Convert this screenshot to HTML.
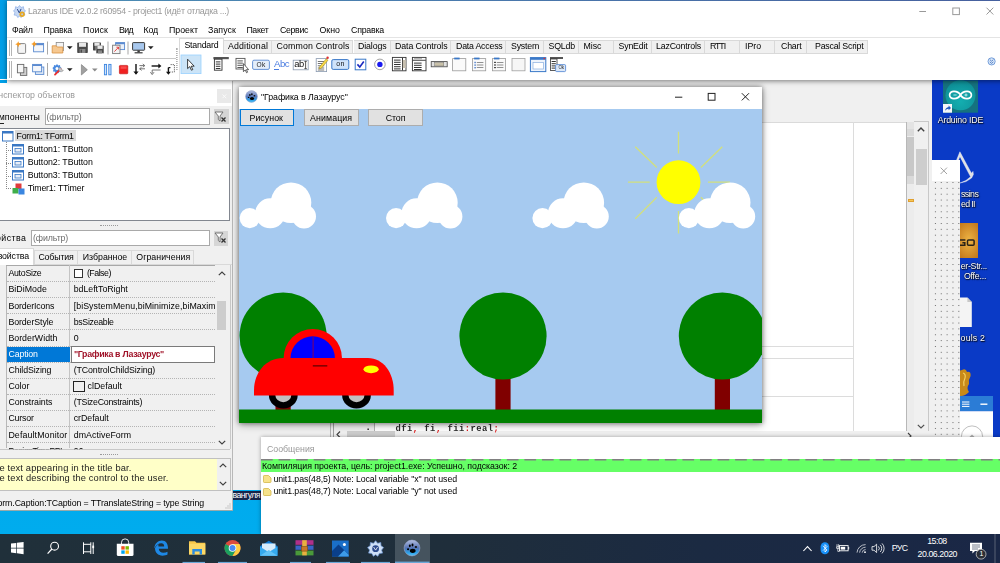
<!DOCTYPE html>
<html><head><meta charset="utf-8">
<style>
*{margin:0;padding:0;box-sizing:border-box}
html{background:#0a3ac6}html,body{width:1000px;height:563px;overflow:hidden;font-family:"Liberation Sans",sans-serif;font-size:8.8px;color:#000}
#R{position:absolute;left:-6px;top:-6px;width:1012px;height:575px;overflow:hidden;filter:blur(0.4px)}#I{position:absolute;left:6px;top:6px;width:0;height:0}
.L{position:absolute;left:0;top:0;width:0;height:0}
.a{position:absolute}
.t{position:absolute;white-space:pre}
svg{position:absolute;overflow:visible}
</style></head><body><div id="R"><div id="I">
<div class="L"><div class="a" style="left:-5px;top:-5px;width:267.00px;height:539.00px;background:linear-gradient(180deg,#009fe8 0%,#00a4ea 60%,#00acee 100%);"></div>
<div class="a" style="left:932px;top:78px;width:74.00px;height:362.00px;background:#0a3ac6;"></div>
<div class="a" style="left:232px;top:491px;width:29.00px;height:8.50px;background:#16264a;"></div>
<svg style="left:930px;top:78px;overflow:hidden" width="70" height="360" viewBox="930 78 70 360"><rect x="943" y="80.4" width="35" height="32.3" fill="#15727f"/><circle cx="960.5" cy="95.3" r="15" fill="url(#ardg)"/><defs><radialGradient id="ardg" cx="0.5" cy="0.7" r="0.7"><stop offset="0" stop-color="#14aeb0"/><stop offset="1" stop-color="#0e8e96"/></radialGradient></defs><path d="M960.5 95 C958 90.6 949.6 89.8 949.6 95 C949.6 100.2 958 99.4 960.5 95 C963 90.6 971.4 89.8 971.4 95 C971.4 100.2 963 99.4 960.5 95 Z" fill="none" stroke="#fff" stroke-width="1.7"/><path d="M953.4 95 H956.6 M964.4 95 H967.6 M966 93.4 V96.6" stroke="#fff" stroke-width="0.7"/><rect x="943" y="104" width="9" height="8.7" fill="#f4f6f8"/><path d="M945.2 110.8 Q945.4 107.4 948.6 107 V105.6 L951 108 L948.6 110.2 V108.8 Q946.4 108.8 945.2 110.8 Z" fill="#1a58c0"/><path d="M959.9 151.8 L971.4 173.2 L973 171.4 L973.4 174.4 L971.6 178 L966 181.6 L960 183 L966 180.4 L970.6 176.8 L969.4 174.6 L959.9 156.4 L956 166 L954.4 165.4 Z" fill="#e0e0e4" stroke="#fff" stroke-width="0.4"/><rect x="955" y="223" width="23" height="35" fill="#e09a28"/><rect x="955" y="223" width="23" height="35" fill="url(#csg)"/><defs><radialGradient id="csg" cx="0.6" cy="0.5" r="0.7"><stop offset="0" stop-color="#f0b848" stop-opacity="0.9"/><stop offset="1" stop-color="#b86a14" stop-opacity="0.9"/></radialGradient></defs><rect x="967.5" y="240" width="6.6" height="5.3" rx="1" fill="none" stroke="#2a2218" stroke-width="1.5"/><path d="M965.4 240 H958 V245.3 H964.8 V242.8 H962.4" fill="none" stroke="#2a2218" stroke-width="1.5"/><path d="M955 297.6 H967.4 L971.8 302 V327 H955 Z" fill="#f4f4f4"/><path d="M967.4 297.6 V302 H971.8 Z" fill="#c8c8c8"/><path d="M962 370 Q966 368 967 372 Q971 371 970.6 376 Q968 380 969 384 Q966 388 969 392 Q965 396 961 396 H955 V372 Z" fill="#c88a18"/><path d="M963 373 Q966 374 965 378 Q963 382 964 386" stroke="#f4d060" stroke-width="1.2" fill="none"/><rect x="955" y="396" width="38" height="15.2" fill="#2b7cd6"/><rect x="955" y="411.2" width="38" height="26" fill="#fff"/><path d="M962 402 H969.4 M962 404.2 H969.4 M962 406.4 H969.4" stroke="#fff" stroke-width="1"/><path d="M980.4 404.2 H987.4" stroke="#fff" stroke-width="1.4"/><circle cx="972" cy="436.5" r="10.6" fill="none" stroke="#b8b8b8" stroke-width="0.9"/><path d="M969.4 437 L972 434.4 L974.6 437" fill="#b0b0b0"/></svg>
<div class="t" style="left:232.50px;top:488.53px;height:12px;line-height:12px;font-size:8.8px;color:#fff;letter-spacing:-0.592px;">вангуля</div>
<div class="t" style="left:937.70px;top:113.73px;height:12px;line-height:12px;font-size:8.8px;color:#fff;letter-spacing:-0.176px;text-shadow:0.7px 0.9px 1.2px #000, 0 0 1.5px rgba(0,0,0,.9);">Arduino IDE</div>
<div class="t" style="left:961.00px;top:187.63px;height:12px;line-height:12px;font-size:8.8px;color:#fff;letter-spacing:-0.549px;text-shadow:0.7px 0.9px 1.2px #000, 0 0 1.5px rgba(0,0,0,.9);">ssins</div>
<div class="t" style="left:961.00px;top:197.93px;height:12px;line-height:12px;font-size:8.8px;color:#fff;letter-spacing:-0.665px;text-shadow:0.7px 0.9px 1.2px #000, 0 0 1.5px rgba(0,0,0,.9);">ed II</div>
<div class="t" style="left:960.70px;top:260.23px;height:12px;line-height:12px;font-size:8.8px;color:#fff;letter-spacing:-0.283px;text-shadow:0.7px 0.9px 1.2px #000, 0 0 1.5px rgba(0,0,0,.9);">er-Str...</div>
<div class="t" style="left:963.90px;top:270.13px;height:12px;line-height:12px;font-size:8.8px;color:#fff;letter-spacing:-0.214px;text-shadow:0.7px 0.9px 1.2px #000, 0 0 1.5px rgba(0,0,0,.9);">Offe...</div>
<div class="t" style="left:960.60px;top:332.03px;height:12px;line-height:12px;font-size:8.8px;color:#fff;letter-spacing:0.153px;text-shadow:0.7px 0.9px 1.2px #000, 0 0 1.5px rgba(0,0,0,.9);">ouls 2</div></div>
<div class="L"><div class="a" style="left:932.2px;top:159.7px;width:28.30px;height:278.30px;background:#f0f0f0;"></div>
<div class="a" style="left:932.2px;top:159.7px;width:28.30px;height:21.30px;background:#fff;"></div>
<svg style="left:940px;top:166.5px" width="8" height="8"><path d="M0.6 0.6 L7 7 M7 0.6 L0.6 7" stroke="#999" stroke-width="0.9"/></svg>
<svg style="left:932.2px;top:181px;overflow:hidden" width="28.3" height="255.5"><defs><pattern id="dots" x="2.9" y="1" width="5.856" height="5.856" patternUnits="userSpaceOnUse"><rect x="0" y="0" width="1" height="1" fill="#6a6a6a"/></pattern></defs><rect width="28.3" height="255.5" fill="url(#dots)"/></svg></div>
<div class="L"><div class="a" style="left:232px;top:78px;width:700.00px;height:412.00px;background:#f0f0f0;"></div>
<div class="a" style="left:240px;top:121.5px;width:688.50px;height:314.50px;background:#fff;border-top:1px solid #dadada;"></div>
<div class="a" style="left:852.5px;top:122px;width:1.00px;height:314.00px;background:#dcdcdc;"></div>
<div class="a" style="left:762px;top:345.5px;width:91.00px;height:1.00px;background:#dcdcdc;"></div>
<div class="a" style="left:762px;top:357.5px;width:91.00px;height:1.00px;background:#dcdcdc;"></div>
<div class="a" style="left:762px;top:395.5px;width:91.00px;height:1.00px;background:#dcdcdc;"></div>
<div class="a" style="left:906.2px;top:122px;width:0.90px;height:310.00px;background:#b8b8b8;"></div>
<div class="a" style="left:907px;top:122px;width:7.10px;height:310.00px;background:#ececec;"></div>
<div class="a" style="left:907px;top:122px;width:7.10px;height:6.60px;background:#e4e4e4;"></div>
<div class="a" style="left:907px;top:128.6px;width:7.10px;height:7.90px;background:#dadada;"></div>
<div class="a" style="left:907px;top:136.5px;width:7.10px;height:39.10px;background:#c8c8c8;"></div>
<div class="a" style="left:907px;top:175.6px;width:7.10px;height:8.80px;background:#dadada;"></div>
<div class="a" style="left:908px;top:199px;width:5.80px;height:2.60px;background:#f6c656;border:0.5px solid #e0a030;"></div>
<div class="a" style="left:914px;top:122px;width:14.50px;height:314.00px;background:#f0f0f0;"></div>
<div class="a" style="left:928.2px;top:121.5px;width:0.80px;height:314.50px;background:#c8c8c8;"></div>
<div class="a" style="left:914px;top:121.3px;width:15.00px;height:0.80px;background:#c8c8c8;"></div>
<div class="a" style="left:916.2px;top:149px;width:10.70px;height:35.90px;background:#cdcdcd;"></div>
<svg style="left:917.3px;top:127px" width="8" height="5"><path d="M0.8 4.2 L4 1 L7.2 4.2" fill="none" stroke="#404040" stroke-width="1.4"/></svg>
<svg style="left:917px;top:424px" width="8" height="5"><path d="M0.8 0.8 L4 4 L7.2 0.8" fill="none" stroke="#505050" stroke-width="1.2"/></svg>
<div class="a" style="left:232px;top:422px;width:101.00px;height:68.00px;background:#f0f0f0;"></div>
<div class="a" style="left:330px;top:422px;width:1.00px;height:15.00px;background:#b4b4b4;"></div>
<div class="a" style="left:333px;top:422px;width:1.00px;height:15.00px;background:#a0a0a0;"></div>
<div class="a" style="left:334px;top:422px;width:40.00px;height:9.00px;background:#f0f0f0;"></div>
<div class="a" style="left:374px;top:422px;width:1.00px;height:9.00px;background:#b0b0b0;"></div>
<div class="a" style="left:375px;top:422px;width:531.00px;height:9.00px;background:#fff;"></div>
<div class="a" style="left:334px;top:431px;width:572.00px;height:6.00px;background:#f0f0f0;"></div>
<div class="a" style="left:347px;top:431.3px;width:48.00px;height:5.70px;background:#cdcdcd;"></div>
<svg style="left:336px;top:431px" width="5" height="6"><path d="M4 0.5 L1 3.5 L4 6.5" fill="none" stroke="#404040" stroke-width="1.1"/></svg>
<div class="a" style="left:906px;top:431px;width:26.00px;height:7.00px;background:#f0f0f0;"></div>
<div class="a" style="left:852.5px;top:422px;width:1.00px;height:9.00px;background:#dcdcdc;"></div>
<svg style="left:906.5px;top:432.5px" width="5" height="6"><path d="M1 0 L4 3 L1 6" fill="none" stroke="#404040" stroke-width="1.1"/></svg>
<div class="t" style="left:365.50px;top:422.23px;height:12px;line-height:12px;font-size:8.8px;color:#000;font-weight:bold;font-family:'Liberation Mono',monospace;">.</div>
<div class="t" style="left:395.60px;top:422.53px;height:12px;line-height:12px;font-size:8.8px;color:#2a2a2a;letter-spacing:0.476px;font-weight:bold;font-family:'Liberation Mono',monospace;">dfi  fi  fii real </div>
<div class="t" style="left:395.60px;top:422.53px;height:12px;line-height:12px;font-size:8.8px;color:#e02020;letter-spacing:0.476px;font-weight:bold;font-family:'Liberation Mono',monospace;">   ,   ,    :    ;</div></div>
<div class="L"><div class="a" style="left:-5px;top:79px;width:237.00px;height:431.00px;background:#f0f0f0;"></div>
<div class="a" style="left:-5px;top:79px;width:237.00px;height:26.50px;background:#fff;"></div>
<div class="a" style="left:-5px;top:80px;width:11.50px;height:3.00px;background:#00a0e8;"></div>
<div class="a" style="left:217.4px;top:89.3px;width:13.50px;height:13.50px;background:#e9e9e9;"></div>
<svg style="left:222px;top:94.3px" width="5" height="5"><path d="M0.5 0.5 L4.2 4.2 M4.2 0.5 L0.5 4.2" stroke="#fbfbfb" stroke-width="0.9"/></svg>
<div class="a" style="left:0px;top:122.8px;width:4.20px;height:0.80px;background:#222;"></div>
<div class="a" style="left:44.5px;top:108px;width:165.30px;height:17.00px;background:#fff;border:1px solid #a9a9a9;"></div>
<div class="a" style="left:213.9px;top:108.9px;width:14.90px;height:15.60px;background:#d4d4d4;"></div>
<svg style="left:214.2px;top:110.8px" width="13" height="12" viewBox="0 0 13 12"><path d="M1 1 H9 L6 5 V10 L4.3 8.6 V5 Z" fill="#fff" stroke="#666" stroke-width="0.9"/><path d="M7.5 6.5 L11.5 10.5 M11.5 6.5 L7.5 10.5" stroke="#333" stroke-width="1.3"/></svg>
<div class="a" style="left:-6px;top:128px;width:235.50px;height:92.50px;background:#fff;border:1px solid #828790;"></div>
<div class="a" style="left:14.5px;top:130px;width:61.20px;height:11.30px;background:#d9d9d9;"></div>
<svg style="left:1.5px;top:130.5px" width="11.5" height="10.5" viewBox="0 0 11.5 10.5"><rect x="0.5" y="0.5" width="10.5" height="9.5" fill="#fff" stroke="#3b78c4" stroke-width="1"/><rect x="0.5" y="0.5" width="10.5" height="2" fill="#3b78c4"/></svg>
<svg style="left:11.7px;top:143.6px" width="12" height="10.5" viewBox="0 0 12 10.5"><rect x="0.5" y="0.5" width="11" height="9.5" fill="#fff" stroke="#3b78c4" stroke-width="1"/><rect x="0.5" y="0.5" width="11" height="2" fill="#3b78c4"/><rect x="3" y="4.5" width="6" height="3.5" fill="#e8eef8" stroke="#3b78c4" stroke-width="0.8"/></svg>
<div class="a" style="left:6px;top:149.5px;width:5.00px;height:1.00px;border-top:1px dotted #888;"></div>
<svg style="left:11.7px;top:156.79999999999998px" width="12" height="10.5" viewBox="0 0 12 10.5"><rect x="0.5" y="0.5" width="11" height="9.5" fill="#fff" stroke="#3b78c4" stroke-width="1"/><rect x="0.5" y="0.5" width="11" height="2" fill="#3b78c4"/><rect x="3" y="4.5" width="6" height="3.5" fill="#e8eef8" stroke="#3b78c4" stroke-width="0.8"/></svg>
<div class="a" style="left:6px;top:162.7px;width:5.00px;height:1.00px;border-top:1px dotted #888;"></div>
<svg style="left:11.7px;top:169.9px" width="12" height="10.5" viewBox="0 0 12 10.5"><rect x="0.5" y="0.5" width="11" height="9.5" fill="#fff" stroke="#3b78c4" stroke-width="1"/><rect x="0.5" y="0.5" width="11" height="2" fill="#3b78c4"/><rect x="3" y="4.5" width="6" height="3.5" fill="#e8eef8" stroke="#3b78c4" stroke-width="0.8"/></svg>
<div class="a" style="left:6px;top:175.8px;width:5.00px;height:1.00px;border-top:1px dotted #888;"></div>
<svg style="left:11.5px;top:182.5px" width="13" height="12" viewBox="0 0 13 12"><rect x="3.5" y="0.5" width="6" height="5.5" fill="#e03c3c"/><rect x="0.5" y="5" width="6" height="5.5" fill="#3fae49"/><rect x="6.5" y="5.5" width="6" height="6" fill="#3a86e0"/></svg>
<div class="a" style="left:6px;top:188.4px;width:5.00px;height:1.00px;border-top:1px dotted #888;"></div>
<div class="a" style="left:6px;top:141.5px;width:1.00px;height:47.50px;border-left:1px dotted #888;"></div>
<div class="a" style="left:99.5px;top:225.3px;width:18.00px;height:1.00px;border-top:1px dotted #9a9a9a;"></div>
<div class="a" style="left:30.7px;top:230px;width:179.30px;height:16.30px;background:#fff;border:1px solid #a9a9a9;"></div>
<div class="a" style="left:213.6px;top:230.6px;width:14.90px;height:15.10px;background:#d6d6d6;"></div>
<svg style="left:213.9px;top:232.4px" width="13" height="12" viewBox="0 0 13 12"><path d="M1 1 H9 L6 5 V10 L4.3 8.6 V5 Z" fill="#fff" stroke="#666" stroke-width="0.9"/><path d="M7.5 6.5 L11.5 10.5 M11.5 6.5 L7.5 10.5" stroke="#333" stroke-width="1.3"/></svg>
<div class="a" style="left:-5px;top:264.3px;width:237.00px;height:1.00px;background:#d9d9d9;"></div>
<div class="a" style="left:-6px;top:248px;width:40.00px;height:17.30px;background:#fff;border:1px solid #d9d9d9;border-bottom:none;"></div>
<div class="a" style="left:34px;top:249.5px;width:43.50px;height:14.80px;background:#f0f0f0;border:1px solid #d9d9d9;border-bottom:none;"></div>
<div class="a" style="left:77.5px;top:249.5px;width:54.00px;height:14.80px;background:#f0f0f0;border:1px solid #d9d9d9;border-bottom:none;border-left:none;"></div>
<div class="a" style="left:131.5px;top:249.5px;width:62.00px;height:14.80px;background:#f0f0f0;border:1px solid #d9d9d9;border-bottom:none;border-left:none;"></div>
<div class="a" style="left:6px;top:265.4px;width:209.00px;height:183.10px;background:#f0f0f0;overflow:hidden;"></div>
<div class="a" style="left:6px;top:265.4px;width:1.00px;height:183.10px;background:#b8b8b8;"></div>
<div class="a" style="left:6px;top:265.2px;width:224.00px;height:0.90px;background:#a8a8a8;"></div>
<div class="a" style="left:69.3px;top:265.4px;width:1.00px;height:183.10px;background:#c4c4c4;"></div>
<div class="a" style="left:7px;top:281.03999999999996px;width:208.00px;height:1.00px;border-top:1px dotted #b4b4b4;"></div>
<div class="a" style="left:73.7px;top:268.9px;width:9.10px;height:9.00px;background:#fff;border:1px solid #333;"></div>
<div class="a" style="left:7px;top:297.17999999999995px;width:208.00px;height:1.00px;border-top:1px dotted #b4b4b4;"></div>
<div class="a" style="left:7px;top:313.32px;width:208.00px;height:1.00px;border-top:1px dotted #b4b4b4;"></div>
<div class="a" style="left:7px;top:329.46px;width:208.00px;height:1.00px;border-top:1px dotted #b4b4b4;"></div>
<div class="a" style="left:7px;top:345.59999999999997px;width:208.00px;height:1.00px;border-top:1px dotted #b4b4b4;"></div>
<div class="a" style="left:7px;top:361.74px;width:208.00px;height:1.00px;border-top:1px dotted #b4b4b4;"></div>
<div class="a" style="left:7px;top:346.5px;width:62.50px;height:15.44px;background:#0078d7;"></div>
<div class="a" style="left:71px;top:345.5px;width:144.00px;height:17.54px;background:#fff;border:1px solid #7a7a7a;"></div>
<div class="a" style="left:7px;top:377.88px;width:208.00px;height:1.00px;border-top:1px dotted #b4b4b4;"></div>
<div class="a" style="left:7px;top:394.02px;width:208.00px;height:1.00px;border-top:1px dotted #b4b4b4;"></div>
<div class="a" style="left:72.5px;top:381.48px;width:12.00px;height:11.00px;background:#f0f0f0;border:1px solid #222;"></div>
<div class="a" style="left:7px;top:410.15999999999997px;width:208.00px;height:1.00px;border-top:1px dotted #b4b4b4;"></div>
<div class="a" style="left:7px;top:426.29999999999995px;width:208.00px;height:1.00px;border-top:1px dotted #b4b4b4;"></div>
<div class="a" style="left:7px;top:442.44px;width:208.00px;height:1.00px;border-top:1px dotted #b4b4b4;"></div>
<div class="a" style="left:215px;top:265.4px;width:14.50px;height:183.10px;background:#f0f0f0;"></div>
<div class="a" style="left:216.6px;top:300.8px;width:9.80px;height:29.20px;background:#cdcdcd;"></div>
<svg style="left:217.5px;top:270.5px" width="8" height="5"><path d="M0.8 4.2 L4 1 L7.2 4.2" fill="none" stroke="#404040" stroke-width="1.2"/></svg>
<svg style="left:217.5px;top:439.5px" width="8" height="5"><path d="M0.8 0.8 L4 4 L7.2 0.8" fill="none" stroke="#404040" stroke-width="1.2"/></svg>
<div class="a" style="left:-5px;top:448.5px;width:235.00px;height:1.00px;background:#c8c8c8;"></div>
<div class="a" style="left:229.5px;top:265px;width:1.00px;height:184.00px;background:#c8c8c8;"></div>
<div class="a" style="left:99.5px;top:454.3px;width:18.00px;height:1.00px;border-top:1px dotted #9a9a9a;"></div>
<div class="a" style="left:-5px;top:458px;width:235.50px;height:33.00px;background:#f0f0f0;border:1px solid #c0c0c0;border-left:none;"></div>
<div class="a" style="left:-5px;top:459px;width:221.50px;height:31.00px;background:#ffffc8;"></div>
<svg style="left:218.5px;top:463.3px" width="8" height="5"><path d="M0.8 4.2 L4 1 L7.2 4.2" fill="none" stroke="#404040" stroke-width="1.2"/></svg>
<svg style="left:218.5px;top:481.3px" width="8" height="5"><path d="M0.8 0.8 L4 4 L7.2 0.8" fill="none" stroke="#404040" stroke-width="1.2"/></svg>
<svg style="left:224px;top:502px" width="7" height="7"><path d="M5.5 1.5h1v1h-1z M3.5 3.5h1v1h-1z M5.5 3.5h1v1h-1z M1.5 5.5h1v1h-1z M3.5 5.5h1v1h-1z M5.5 5.5h1v1h-1z" fill="#a0a0a0"/></svg>
<div class="a" style="left:231.5px;top:80.5px;width:1.00px;height:429.50px;background:#b8b8b8;"></div>
<div class="a" style="left:-5px;top:509.5px;width:237.50px;height:1.00px;background:#9aa;"></div>
<div class="t" style="left:-8.00px;top:89.13px;height:12px;line-height:12px;font-size:8.8px;color:#999;letter-spacing:0.010px;">Инспектор объектов</div>
<div class="t" style="left:-11.50px;top:111.43px;height:12px;line-height:12px;font-size:8.8px;color:#000;letter-spacing:0.081px;">Компоненты</div>
<div class="t" style="left:46.50px;top:110.93px;height:12px;line-height:12px;font-size:8.8px;color:#6d6d6d;letter-spacing:-0.096px;">(фильтр)</div>
<div class="t" style="left:16.60px;top:129.83px;height:12px;line-height:12px;font-size:8.8px;color:#000;letter-spacing:-0.303px;">Form1: TForm1</div>
<div class="t" style="left:27.70px;top:142.73px;height:12px;line-height:12px;font-size:8.8px;color:#000;letter-spacing:-0.048px;">Button1: TButton</div>
<div class="t" style="left:27.70px;top:155.93px;height:12px;line-height:12px;font-size:8.8px;color:#000;letter-spacing:-0.048px;">Button2: TButton</div>
<div class="t" style="left:27.70px;top:169.03px;height:12px;line-height:12px;font-size:8.8px;color:#000;letter-spacing:-0.048px;">Button3: TButton</div>
<div class="t" style="left:27.70px;top:182.03px;height:12px;line-height:12px;font-size:8.8px;color:#000;letter-spacing:-0.201px;">Timer1: TTimer</div>
<div class="t" style="left:-15.80px;top:231.53px;height:12px;line-height:12px;font-size:8.8px;color:#000;letter-spacing:0.445px;">Свойства</div>
<div class="t" style="left:33.00px;top:231.53px;height:12px;line-height:12px;font-size:8.8px;color:#6d6d6d;letter-spacing:-0.096px;">(фильтр)</div>
<div class="t" style="left:-8.60px;top:249.53px;height:12px;line-height:12px;font-size:8.8px;color:#000;letter-spacing:-0.130px;">Свойства</div>
<div class="t" style="left:38.40px;top:250.73px;height:12px;line-height:12px;font-size:8.8px;color:#000;letter-spacing:-0.147px;">События</div>
<div class="t" style="left:82.80px;top:250.73px;height:12px;line-height:12px;font-size:8.8px;color:#000;letter-spacing:-0.022px;">Избранное</div>
<div class="t" style="left:136.30px;top:250.73px;height:12px;line-height:12px;font-size:8.8px;color:#000;letter-spacing:0.034px;">Ограничения</div>
<div class="t" style="left:8.40px;top:267.23px;height:12px;line-height:12px;font-size:8.8px;color:#000;letter-spacing:-0.265px;">AutoSize</div>
<div class="t" style="left:86.90px;top:267.23px;height:12px;line-height:12px;font-size:8.8px;color:#000;letter-spacing:-0.482px;">(False)</div>
<div class="t" style="left:8.40px;top:283.37px;height:12px;line-height:12px;font-size:8.8px;color:#000;letter-spacing:0.045px;">BiDiMode</div>
<div class="t" style="left:73.70px;top:283.37px;height:12px;line-height:12px;font-size:8.8px;color:#000;letter-spacing:-0.023px;">bdLeftToRight</div>
<div class="t" style="left:8.40px;top:299.51px;height:12px;line-height:12px;font-size:8.8px;color:#000;letter-spacing:-0.131px;">BorderIcons</div>
<div class="t" style="left:73.70px;top:299.51px;height:12px;line-height:12px;font-size:8.8px;color:#000;letter-spacing:0.068px;">[biSystemMenu,biMinimize,biMaxim</div>
<div class="t" style="left:8.40px;top:315.65px;height:12px;line-height:12px;font-size:8.8px;color:#000;letter-spacing:-0.088px;">BorderStyle</div>
<div class="t" style="left:73.70px;top:315.65px;height:12px;line-height:12px;font-size:8.8px;color:#000;letter-spacing:-0.305px;">bsSizeable</div>
<div class="t" style="left:8.40px;top:331.79px;height:12px;line-height:12px;font-size:8.8px;color:#000;letter-spacing:0.010px;">BorderWidth</div>
<div class="t" style="left:73.70px;top:331.79px;height:12px;line-height:12px;font-size:8.8px;color:#000;">0</div>
<div class="t" style="left:8.40px;top:347.93px;height:12px;line-height:12px;font-size:8.8px;color:#fff;letter-spacing:-0.118px;">Caption</div>
<div class="t" style="left:73.90px;top:347.93px;height:12px;line-height:12px;font-size:8.8px;color:#a01228;letter-spacing:-0.300px;font-weight:bold;">&quot;Графика в Лазаурус&quot;</div>
<div class="t" style="left:8.40px;top:364.07px;height:12px;line-height:12px;font-size:8.8px;color:#000;letter-spacing:-0.092px;">ChildSizing</div>
<div class="t" style="left:73.70px;top:364.07px;height:12px;line-height:12px;font-size:8.8px;color:#000;letter-spacing:-0.100px;">(TControlChildSizing)</div>
<div class="t" style="left:8.40px;top:380.21px;height:12px;line-height:12px;font-size:8.8px;color:#000;letter-spacing:-0.006px;">Color</div>
<div class="t" style="left:87.50px;top:380.21px;height:12px;line-height:12px;font-size:8.8px;color:#000;letter-spacing:0.030px;">clDefault</div>
<div class="t" style="left:8.40px;top:396.35px;height:12px;line-height:12px;font-size:8.8px;color:#000;letter-spacing:-0.045px;">Constraints</div>
<div class="t" style="left:73.70px;top:396.35px;height:12px;line-height:12px;font-size:8.8px;color:#000;letter-spacing:-0.241px;">(TSizeConstraints)</div>
<div class="t" style="left:8.40px;top:412.49px;height:12px;line-height:12px;font-size:8.8px;color:#000;letter-spacing:-0.151px;">Cursor</div>
<div class="t" style="left:73.70px;top:412.49px;height:12px;line-height:12px;font-size:8.8px;color:#000;letter-spacing:-0.023px;">crDefault</div>
<div class="t" style="left:8.40px;top:428.63px;height:12px;line-height:12px;font-size:8.8px;color:#000;letter-spacing:0.127px;">DefaultMonitor</div>
<div class="t" style="left:73.70px;top:428.63px;height:12px;line-height:12px;font-size:8.8px;color:#000;letter-spacing:0.066px;">dmActiveForm</div>
<div class="t" style="left:8.40px;top:444.77px;height:12px;line-height:12px;font-size:8.8px;color:#000;letter-spacing:-0.554px;clip-path:inset(0 0 7.5px 0);">DesignTimePPI</div>
<div class="t" style="left:73.70px;top:444.77px;height:12px;line-height:12px;font-size:8.8px;color:#000;clip-path:inset(0 0 7.5px 0);">96</div>
<div class="t" style="left:-0.50px;top:461.69px;height:12px;line-height:12px;font-size:9.3px;color:#1c1c1c;letter-spacing:0.142px;">e text appearing in the title bar.</div>
<div class="t" style="left:-0.50px;top:472.39px;height:12px;line-height:12px;font-size:9.3px;color:#1c1c1c;letter-spacing:0.160px;">e text describing the control to the user.</div>
<div class="t" style="left:-2.50px;top:496.93px;height:12px;line-height:12px;font-size:8.8px;color:#000;letter-spacing:-0.117px;">orm.Caption:TCaption = TTranslateString = type String</div></div>
<div class="L"><div class="a" style="left:239px;top:86.9px;width:523.30px;height:335.70px;background:#fff;box-shadow:0 0 5px rgba(0,0,0,.45), 0 2px 8px rgba(0,0,0,.3);"></div>
<svg style="left:244.5px;top:90px" width="13" height="13" viewBox="0 0 13 13"><defs><linearGradient id="pg" x1="0" y1="0" x2="0" y2="1"><stop offset="0" stop-color="#b4bee0"/><stop offset="0.5" stop-color="#5c7aba"/><stop offset="0.8" stop-color="#2aa0e8"/><stop offset="1" stop-color="#58c0f4"/></linearGradient></defs><circle cx="6.5" cy="6.5" r="5.9" fill="url(#pg)" stroke="#8c9cc8" stroke-width="0.5"/><ellipse cx="7" cy="8.6" rx="2.1" ry="1.5" fill="#000"/><ellipse cx="4.9" cy="4.9" rx="0.75" ry="1" fill="#000"/><ellipse cx="6.9" cy="4.3" rx="0.75" ry="1" fill="#000"/><ellipse cx="9.4" cy="5.8" rx="0.9" ry="0.8" fill="#111"/><ellipse cx="3.6" cy="7.4" rx="0.8" ry="0.7" fill="#000"/></svg>
<svg style="left:670px;top:90px" width="85" height="14" viewBox="670 90 85 14"><path d="M675 97.2 H682.3" stroke="#222" stroke-width="1"/><rect x="708.2" y="93.4" width="6.8" height="6.8" fill="none" stroke="#222" stroke-width="1"/><path d="M741.8 93.2 L749 100.4 M749 93.2 L741.8 100.4" stroke="#222" stroke-width="1"/></svg>
<svg style="left:239px;top:108.5px;overflow:hidden" width="523.3" height="314.1" viewBox="239 108.5 523.3 314.1"><g><rect x="239" y="108.5" width="524" height="315" fill="#a6caf0"/><g stroke="#d2e07c" stroke-width="1.25"><path d="M678.5 131.2 V153 M678.5 210.5 V233 M628 181.7 H649.7 M708 181.7 H730 M635.3 146.2 L656.8 167 M722.3 146.2 L700.9 167 M635.3 218.2 L656.8 196.8 M700.9 196.8 L722.3 218.2"/></g><circle cx="678.5" cy="181.7" r="21.9" fill="#ffff00"/><rect x="275.5" y="375" width="15.2" height="35" fill="#800000"/><circle cx="283.1" cy="335.5" r="43.6" fill="#008000"/><rect x="495.4" y="375" width="15.2" height="35" fill="#800000"/><circle cx="503.0" cy="335.5" r="43.6" fill="#008000"/><rect x="714.8" y="375" width="15.2" height="35" fill="#800000"/><circle cx="722.4" cy="335.5" r="43.6" fill="#008000"/><g fill="#fff"><circle cx="249.7" cy="217.6" r="10.1"/><circle cx="270.2" cy="212.8" r="15"/><circle cx="291.0" cy="202.2" r="20.3"/><circle cx="304.0" cy="215.9" r="12"/></g><g fill="#fff"><circle cx="396.1" cy="217.6" r="10.1"/><circle cx="416.6" cy="212.8" r="15"/><circle cx="437.4" cy="202.2" r="20.3"/><circle cx="450.4" cy="215.9" r="12"/></g><g fill="#fff"><circle cx="542.5" cy="217.6" r="10.1"/><circle cx="563.0" cy="212.8" r="15"/><circle cx="583.8" cy="202.2" r="20.3"/><circle cx="596.8" cy="215.9" r="12"/></g><g fill="#fff"><circle cx="688.9" cy="217.6" r="10.1"/><circle cx="709.4" cy="212.8" r="15"/><circle cx="730.2" cy="202.2" r="20.3"/><circle cx="743.2" cy="215.9" r="12"/></g><rect x="239" y="409" width="524" height="13.7" fill="#008000"/><path d="M268.90000000000003 394.5 A14.4 13.6 0 0 0 297.7 394.5 Z" fill="#000"/><path d="M275.3 394.5 A8 7.2 0 0 0 291.3 394.5 Z" fill="#c0c0c0"/><path d="M342.1 394.5 A14.4 13.6 0 0 0 370.9 394.5 Z" fill="#000"/><path d="M348.5 394.5 A8 7.2 0 0 0 364.5 394.5 Z" fill="#c0c0c0"/><path d="M254 394.9 V390 C254 372 266 357.6 283 357.6 H368 C383 357.6 393.7 372 393.7 390 V394.9 Z" fill="#ff0000"/><circle cx="312.8" cy="357.7" r="29.2" fill="#ff0000"/><path d="M290.5 357.6 A22.2 21.8 0 0 1 334.9 357.6 Z" fill="#0000ff"/><path d="M313.1 336 V357.6" stroke="#90004a" stroke-width="0.9"/><path d="M312.8 365.4 H327.3" stroke="#200000" stroke-width="0.9"/><ellipse cx="371.1" cy="368.8" rx="7.6" ry="3.9" fill="#ffff00"/></g></svg>
<div class="a" style="left:240px;top:109px;width:54.00px;height:17.30px;background:#e1e1e1;border:1.6px solid #0078d7;"></div>
<div class="a" style="left:304.2px;top:109.3px;width:54.40px;height:17.00px;background:#e1e1e1;border:1px solid #adadad;"></div>
<div class="a" style="left:368.2px;top:109.3px;width:54.40px;height:17.00px;background:#e1e1e1;border:1px solid #adadad;"></div>
<div class="t" style="left:261.00px;top:90.83px;height:12px;line-height:12px;font-size:8.8px;color:#000;letter-spacing:-0.072px;">&quot;Графика в Лазаурус&quot;</div>
<div class="t" style="left:249.50px;top:111.53px;height:12px;line-height:12px;font-size:8.8px;color:#000;letter-spacing:0.045px;">Рисунок</div>
<div class="t" style="left:310.00px;top:111.53px;height:12px;line-height:12px;font-size:8.8px;color:#000;letter-spacing:0.113px;">Анимация</div>
<div class="t" style="left:385.80px;top:111.53px;height:12px;line-height:12px;font-size:8.8px;color:#000;letter-spacing:-0.113px;">Стоп</div></div>
<div class="L"><div class="a" style="left:260.6px;top:437.3px;width:745.40px;height:96.70px;background:#fff;box-shadow:0 0 4px rgba(0,0,0,.35);"></div>
<div class="a" style="left:261.3px;top:458.9px;width:744.70px;height:13.30px;background:#66ff66;"></div>
<svg style="left:261.3px;top:458.9px" width="739" height="2"><path d="M0 0.8 H739" stroke="#808080" stroke-width="1.5" stroke-dasharray="11.7 5.86"/></svg>
<svg style="left:263px;top:475.3px" width="8.5" height="8" viewBox="0 0 8.5 8"><path d="M0.5 1.2 Q0.5 0.5 1.2 0.5 H5.5 L8 3 V6.8 Q8 7.5 7.3 7.5 H1.2 Q0.5 7.5 0.5 6.8 Z" fill="#f7e28b" stroke="#d4b84a" stroke-width="0.8"/></svg>
<svg style="left:263px;top:487.5px" width="8.5" height="8" viewBox="0 0 8.5 8"><path d="M0.5 1.2 Q0.5 0.5 1.2 0.5 H5.5 L8 3 V6.8 Q8 7.5 7.3 7.5 H1.2 Q0.5 7.5 0.5 6.8 Z" fill="#f7e28b" stroke="#d4b84a" stroke-width="0.8"/></svg>
<div class="t" style="left:267.00px;top:443.03px;height:12px;line-height:12px;font-size:8.8px;color:#999;letter-spacing:-0.017px;">Сообщения</div>
<div class="t" style="left:262.00px;top:460.13px;height:12px;line-height:12px;font-size:8.8px;color:#000;letter-spacing:-0.047px;">Компиляция проекта, цель: project1.exe: Успешно, подсказок: 2</div>
<div class="t" style="left:273.40px;top:472.73px;height:12px;line-height:12px;font-size:8.8px;color:#000;letter-spacing:-0.093px;">unit1.pas(48,5) Note: Local variable &quot;x&quot; not used</div>
<div class="t" style="left:273.40px;top:484.93px;height:12px;line-height:12px;font-size:8.8px;color:#000;letter-spacing:-0.093px;">unit1.pas(48,7) Note: Local variable &quot;y&quot; not used</div></div>
<div class="L"><div class="a" style="left:6.5px;top:0px;width:999.50px;height:80.30px;background:#fff;box-shadow:0 1px 5px rgba(0,0,0,.5);"></div>
<div class="a" style="left:6.5px;top:0px;width:999.50px;height:1.10px;background:linear-gradient(90deg,#4b8fb5 0%,#4a78ac 50%,#46609e 100%);"></div>
<svg style="left:12.5px;top:4.5px" width="13" height="13" viewBox="-6.5 -6.5 13 13"><path d="M0 -6 L1.6 -4 L4 -4.8 L4.2 -2.2 L6 -0.8 L4.6 1.2 L5.4 3.6 L3 3.8 L1.8 6 L0 4.8 L-1.8 6 L-3 3.8 L-5.4 3.6 L-4.6 1.2 L-6 -0.8 L-4.2 -2.2 L-4 -4.8 L-1.6 -4 Z" fill="#c6d8f4" stroke="#7ea2e0" stroke-width="0.6"/><path d="M-2.2 -2.4 L-0.2 1.4 L1.6 -2.6" stroke="#2c4a8c" stroke-width="1" fill="none"/><circle cx="2.6" cy="2.8" r="2.7" fill="#e8a820"/><circle cx="2.6" cy="2.8" r="1" fill="#c0c8d8"/></svg>
<svg style="left:915px;top:5px" width="85" height="14" viewBox="915 5 85 14"><path d="M919.3 11.5 H926" stroke="#999" stroke-width="1"/><rect x="952.8" y="8" width="6.6" height="6.6" fill="none" stroke="#999" stroke-width="1"/><path d="M986.5 7.7 L993.3 14.5 M993.3 7.7 L986.5 14.5" stroke="#999" stroke-width="1"/></svg>
<div class="a" style="left:7px;top:36.5px;width:993.00px;height:0.80px;background:#e4e4e4;"></div>
<div class="a" style="left:7px;top:57.7px;width:169.00px;height:0.80px;background:#c8c8c8;"></div>
<div class="a" style="left:8.6px;top:39.5px;width:0.80px;height:16.50px;background:#b4b4b4;"></div>
<div class="a" style="left:11.0px;top:39.5px;width:0.80px;height:16.50px;background:#b4b4b4;"></div>
<div class="a" style="left:8.6px;top:61px;width:0.80px;height:16.50px;background:#b4b4b4;"></div>
<div class="a" style="left:11.0px;top:61px;width:0.80px;height:16.50px;background:#b4b4b4;"></div>
<svg style="left:0;top:38px" width="180" height="42" viewBox="0 38 180 42"><rect x="17.8" y="43.6" width="7.8" height="9.8" rx="1" fill="#f4f4f4" stroke="#7a7a7a" stroke-width="0.9"/><path d="M18.2 41.2 L19.099999999999998 43.300000000000004 L21.2 44.2 L19.099999999999998 45.1 L18.2 47.2 L17.3 45.1 L15.2 44.2 L17.3 43.300000000000004 Z" fill="#f59a23"/><rect x="33.6" y="43.4" width="10" height="8.4" fill="#f4f6fa" stroke="#5a8ad0" stroke-width="0.9"/><rect x="33.6" y="43.4" width="10" height="1.8" fill="#5a8ad0"/><path d="M34.2 41 L35.1 43.1 L37.2 44 L35.1 44.9 L34.2 47 L33.300000000000004 44.9 L31.200000000000003 44 L33.300000000000004 43.1 Z" fill="#f59a23"/><rect x="47.0" y="41.5" width="1" height="13" fill="#a8a8a8"/><rect x="56.2" y="42.4" width="7.4" height="8" fill="#f4f4f4" stroke="#8a8a8a" stroke-width="0.8"/><path d="M52.2 45.8 H56.2 L57.2 47 H62.8 V53 H52.2 Z" fill="#f6c890" stroke="#d89040" stroke-width="0.8"/><path d="M67 46.2 H72.6 L69.8 49.2 Z" fill="#222"/><rect x="77.2" y="42.4" width="10.6" height="10.6" rx="0.8" fill="#4a4a4a"/><rect x="79" y="42.8" width="7" height="4" fill="#e8e8e8"/><rect x="79.6" y="49" width="5.8" height="4" fill="#8a8a8a"/><rect x="80.6" y="49.6" width="1.4" height="3" fill="#4a4a4a"/><rect x="93" y="42.4" width="8" height="8" rx="0.6" fill="#4a4a4a"/><rect x="94.4" y="42.8" width="5.2" height="3" fill="#e8e8e8"/><rect x="96" y="45.4" width="8" height="8" rx="0.6" fill="#4a4a4a" stroke="#fff" stroke-width="0.5"/><rect x="97.4" y="45.9" width="5.2" height="3" fill="#e8e8e8"/><rect x="98" y="50.4" width="4" height="3" fill="#8a8a8a"/><rect x="107.5" y="41.5" width="1" height="13" fill="#a8a8a8"/><rect x="115.6" y="42.6" width="9" height="7" fill="#eaf0fa" stroke="#5a8ad0" stroke-width="0.9"/><rect x="115.6" y="42.6" width="9" height="1.6" fill="#5a8ad0"/><rect x="112.6" y="45.2" width="7.4" height="8.4" fill="#f4f4f4" stroke="#7a7a7a" stroke-width="0.9"/><path d="M114.4 51.6 L118.4 47.4 M116.4 47.2 H118.6 V49.4" stroke="#e03030" stroke-width="0.9" fill="none"/><rect x="127.5" y="41.5" width="1" height="13" fill="#a8a8a8"/><rect x="132.6" y="42.6" width="12" height="7.6" rx="0.6" fill="#a8c8ee" stroke="#3a3a3a" stroke-width="1"/><rect x="137.4" y="50.4" width="2.4" height="2" fill="#3a3a3a"/><rect x="134.6" y="52.2" width="8" height="1.2" fill="#3a3a3a"/><path d="M148 46.2 H153.6 L150.8 49.2 Z" fill="#222"/><rect x="20.4" y="67.4" width="6.4" height="8" fill="#d0d0d0" stroke="#6a6a6a" stroke-width="0.9"/><rect x="17.4" y="64.4" width="6.4" height="8.4" fill="#f6f6f6" stroke="#6a6a6a" stroke-width="0.9"/><rect x="35.4" y="67" width="8.4" height="7.4" fill="#dfe8f6" stroke="#5a8ad0" stroke-width="0.9"/><rect x="32.6" y="64.4" width="9" height="7.4" fill="#f4f6fa" stroke="#5a8ad0" stroke-width="0.9"/><rect x="32.6" y="64.4" width="9" height="1.6" fill="#5a8ad0"/><rect x="47.0" y="63" width="1" height="13" fill="#a8a8a8"/><g transform="translate(57 68.6)"><path d="M0 -4.6 L1.2 -3.2 L3 -3.7 L3.2 -1.8 L4.6 -0.6 L3.5 0.9 L4.1 2.8 L2.3 2.9 L1.4 4.6 L0 3.7 L-1.4 4.6 L-2.3 2.9 L-4.1 2.8 L-3.5 0.9 L-4.6 -0.6 L-3.2 -1.8 L-3 -3.7 L-1.2 -3.2 Z" fill="#4a8ae0"/><circle r="1.5" fill="#fff"/></g><path d="M55 74.6 L60.6 69" stroke="#e83030" stroke-width="1.8" stroke-linecap="round"/><path d="M60 67.2 A2.4 2.4 0 1 0 63.4 70.2 L61.6 69.8 L61 68.4 Z" fill="#c8c8c8" stroke="#909090" stroke-width="0.5"/><path d="M67 68.2 H72.6 L69.8 71.2 Z" fill="#222"/><path d="M81.4 64.6 L87.4 69.8 L81.4 75 Z" fill="#a0a0a0" stroke="#787878" stroke-width="0.6"/><path d="M92 68.4 H97.6 L94.8 71.4 Z" fill="#8a8a8a"/><rect x="104.4" y="64.4" width="2.2" height="10.4" fill="#cfe3fa" stroke="#3a84e0" stroke-width="0.9"/><rect x="108.8" y="64.4" width="2.2" height="10.4" fill="#cfe3fa" stroke="#3a84e0" stroke-width="0.9"/><rect x="119.4" y="65.4" width="8.4" height="8.4" rx="0.8" fill="#f02020" stroke="#c01010" stroke-width="0.6"/><rect x="120.6" y="66.4" width="6" height="2.4" fill="#ff6a6a" opacity="0.6"/><path d="M136 64 V73.4" stroke="#111" stroke-width="1.4"/><path d="M133.4 71.6 L136 74.8 L138.6 71.6 Z" fill="#111"/><path d="M139.4 65.6 H144.6 M142.8 64 L144.8 65.6 L142.8 67.2 M145 68.8 H139.8 M141.6 67.2 L139.6 68.8 L141.6 70.4" stroke="#666" stroke-width="0.9" fill="none"/><path d="M151.6 66 H160" stroke="#111" stroke-width="1.4"/><path d="M158.4 63.6 L161.4 66 L158.4 68.4 Z" fill="#111"/><path d="M160.6 70 H152.2 V73.4 M150.4 72.2 L152.2 74.6 L154 72.2" stroke="#666" stroke-width="0.9" fill="none"/><path d="M168.4 67.6 V73.4" stroke="#111" stroke-width="1.4"/><path d="M166 71.8 L168.4 74.8 L170.8 71.8 Z" fill="#111"/><path d="M168.4 67.6 H170.4" stroke="#111" stroke-width="1.2"/><path d="M170.6 64.6 H174.4 V72 H171.6" stroke="#555" stroke-width="0.9" stroke-dasharray="1.2 0.9" fill="none"/></svg>
<div class="a" style="left:176.2px;top:48px;width:2.00px;height:21.50px;border-left:1px dotted #b0b0b0;border-right:1px dotted #c8c8c8;"></div>
<div class="a" style="left:179px;top:38px;width:0.80px;height:42.00px;background:#e2e2e2;"></div>
<div class="a" style="left:180px;top:53.2px;width:687.50px;height:0.80px;background:#d9d9d9;"></div>
<div class="a" style="left:179px;top:38px;width:45.40px;height:16.00px;background:#fff;border:1px solid #d9d9d9;border-bottom:none;"></div>
<div class="a" style="left:224.4px;top:40px;width:47.20px;height:13.20px;background:#f0f0f0;border:1px solid #d9d9d9;border-bottom:none;border-left:none;"></div>
<div class="a" style="left:271.6px;top:40px;width:81.90px;height:13.20px;background:#f0f0f0;border:1px solid #d9d9d9;border-bottom:none;border-left:none;"></div>
<div class="a" style="left:353.5px;top:40px;width:37.00px;height:13.20px;background:#f0f0f0;border:1px solid #d9d9d9;border-bottom:none;border-left:none;"></div>
<div class="a" style="left:390.5px;top:40px;width:60.50px;height:13.20px;background:#f0f0f0;border:1px solid #d9d9d9;border-bottom:none;border-left:none;"></div>
<div class="a" style="left:451px;top:40px;width:55.00px;height:13.20px;background:#f0f0f0;border:1px solid #d9d9d9;border-bottom:none;border-left:none;"></div>
<div class="a" style="left:506px;top:40px;width:38.00px;height:13.20px;background:#f0f0f0;border:1px solid #d9d9d9;border-bottom:none;border-left:none;"></div>
<div class="a" style="left:544px;top:40px;width:35.00px;height:13.20px;background:#f0f0f0;border:1px solid #d9d9d9;border-bottom:none;border-left:none;"></div>
<div class="a" style="left:579px;top:40px;width:35.00px;height:13.20px;background:#f0f0f0;border:1px solid #d9d9d9;border-bottom:none;border-left:none;"></div>
<div class="a" style="left:614px;top:40px;width:37.50px;height:13.20px;background:#f0f0f0;border:1px solid #d9d9d9;border-bottom:none;border-left:none;"></div>
<div class="a" style="left:651.5px;top:40px;width:53.50px;height:13.20px;background:#f0f0f0;border:1px solid #d9d9d9;border-bottom:none;border-left:none;"></div>
<div class="a" style="left:705px;top:40px;width:35.00px;height:13.20px;background:#f0f0f0;border:1px solid #d9d9d9;border-bottom:none;border-left:none;"></div>
<div class="a" style="left:740px;top:40px;width:35.00px;height:13.20px;background:#f0f0f0;border:1px solid #d9d9d9;border-bottom:none;border-left:none;"></div>
<div class="a" style="left:775px;top:40px;width:31.50px;height:13.20px;background:#f0f0f0;border:1px solid #d9d9d9;border-bottom:none;border-left:none;"></div>
<div class="a" style="left:806.5px;top:40px;width:61.00px;height:13.20px;background:#f0f0f0;border:1px solid #d9d9d9;border-bottom:none;border-left:none;"></div>
<svg style="left:178px;top:54px" width="822" height="26" viewBox="178 54 822 26"><rect x="181" y="55" width="20" height="18.6" fill="#cce4f7" stroke="#99d1ff" stroke-width="0.8"/><path d="M187.6 59.2 V68.6 L189.8 66.6 L191.4 70.2 L192.8 69.6 L191.2 66.2 H194.2 Z" fill="#fff" stroke="#111" stroke-width="0.8"/><rect x="213.4" y="57" width="15.4" height="2.2" fill="#555"/><rect x="214.4" y="59.2" width="7.6" height="11" fill="#fff" stroke="#333" stroke-width="0.9"/><rect x="215.8" y="61.4" width="4.6" height="1" fill="#333"/><rect x="215.8" y="63.6" width="4.6" height="1" fill="#333"/><rect x="215.8" y="65.8" width="4.6" height="1" fill="#333"/><rect x="215.8" y="68" width="4.6" height="1" fill="#333"/><rect x="236" y="58.4" width="9" height="10.6" fill="#fff" stroke="#555" stroke-width="0.9"/><rect x="237.4" y="60.4" width="5.4" height="1" fill="#555"/><rect x="237.4" y="62.6" width="5.4" height="1" fill="#555"/><rect x="237.4" y="64.8" width="5.4" height="1" fill="#555"/><rect x="237.4" y="67" width="5.4" height="1" fill="#555"/><path d="M243.4 63.6 V71.6 L245.2 70 L246.6 72.8 L247.6 72.2 L246.4 69.6 H248.6 Z" fill="#fff" stroke="#222" stroke-width="0.7"/><rect x="252.6" y="60.2" width="16.8" height="9.2" rx="1.4" fill="#e4eefa" stroke="#5a8ad0" stroke-width="0.9"/><rect x="293.2" y="60.2" width="15" height="9.6" fill="#fff" stroke="#8a9ab0" stroke-width="0.8"/><path d="M305.6 61.6 V68.4 M304.4 61.4 H306.8 M304.4 68.6 H306.8" stroke="#111" stroke-width="0.7"/><rect x="316.2" y="58.6" width="10.4" height="13" fill="#fff" stroke="#8a9ab0" stroke-width="0.8"/><rect x="317.8" y="61" width="6.4" height="0.8" fill="#555"/><rect x="317.8" y="63.2" width="6.4" height="0.8" fill="#555"/><rect x="317.8" y="65.4" width="6.4" height="0.8" fill="#555"/><rect x="317.8" y="67.6" width="6.4" height="0.8" fill="#555"/><rect x="317.8" y="69.6" width="6.4" height="0.8" fill="#555"/><path d="M319.6 66.8 L326.2 58.8 L328 60.2 L321.4 68.2 L319 69 Z" fill="#f8d848" stroke="#8a7a20" stroke-width="0.5"/><circle cx="327.6" cy="57.8" r="1.2" fill="#e03030"/><rect x="331.8" y="59.6" width="17" height="9.8" rx="1.4" fill="#cfe3fa" stroke="#3a78c8" stroke-width="1"/><rect x="355.2" y="59.2" width="10.6" height="10.6" fill="#fff" stroke="#3a78c8" stroke-width="1"/><path d="M357.4 64.4 L359.8 67 L363.8 61.6" stroke="#1a2ac0" stroke-width="1.6" fill="none"/><circle cx="379.9" cy="64.4" r="5.3" fill="#fff" stroke="#8a8a8a" stroke-width="0.8"/><circle cx="379.9" cy="64.4" r="2.7" fill="#1a1af0"/><rect x="392.4" y="57.4" width="13.6" height="13.4" fill="#fff" stroke="#333" stroke-width="0.9"/><rect x="394" y="59.6" width="6.6" height="1" fill="#333"/><rect x="394" y="61.8" width="6.6" height="1" fill="#333"/><rect x="394" y="64" width="6.6" height="1" fill="#333"/><rect x="394" y="66.2" width="6.6" height="1" fill="#333"/><rect x="394" y="68.4" width="6.6" height="1" fill="#333"/><rect x="402" y="57.8" width="1" height="12.6" fill="#333"/><rect x="402.8" y="60" width="3" height="8" fill="#c8c0b0"/><rect x="412.4" y="57.4" width="13.6" height="13.4" fill="#fff" stroke="#333" stroke-width="0.9"/><rect x="412.8" y="59.8" width="13" height="0.9" fill="#333"/><rect x="414" y="58.4" width="8" height="0.8" fill="#888"/><rect x="414" y="62.6" width="7.6" height="1" fill="#333"/><rect x="414" y="64.8" width="7.6" height="1" fill="#333"/><rect x="414" y="67" width="7.6" height="1" fill="#333"/><rect x="414" y="69" width="7.6" height="1" fill="#333"/><rect x="431.2" y="61.6" width="16" height="5.2" fill="#e0e0e0" stroke="#444" stroke-width="0.8"/><rect x="434.6" y="62.4" width="9.2" height="3.6" fill="#c8c0a8" stroke="#666" stroke-width="0.4"/><rect x="452.6" y="58.6" width="13.2" height="12.2" fill="#fafafa" stroke="#9a9a9a" stroke-width="0.8"/><rect x="454.20000000000005" y="57.6" width="5.4" height="1.8" fill="#3a78c8"/><rect x="472.5" y="58.6" width="13.2" height="12.2" fill="#fafafa" stroke="#9a9a9a" stroke-width="0.8"/><rect x="474.1" y="57.6" width="5.4" height="1.8" fill="#3a78c8"/><rect x="492.4" y="58.6" width="13.2" height="12.2" fill="#fafafa" stroke="#9a9a9a" stroke-width="0.8"/><rect x="494.0" y="57.6" width="5.4" height="1.8" fill="#3a78c8"/><rect x="476.8" y="62" width="6.6" height="0.8" fill="#777"/><rect x="476.8" y="64.6" width="6.6" height="0.8" fill="#777"/><rect x="476.8" y="67.2" width="6.6" height="0.8" fill="#777"/><rect x="474.4" y="61.8" width="1.4" height="1.4" fill="#4a7ac8"/><rect x="474.4" y="64.4" width="1.4" height="1.4" fill="#4a7ac8"/><rect x="474.4" y="67" width="1.4" height="1.4" fill="#4a7ac8"/><rect x="496.8" y="62" width="6.6" height="0.8" fill="#777"/><rect x="496.8" y="64.6" width="6.6" height="0.8" fill="#777"/><rect x="496.8" y="67.2" width="6.6" height="0.8" fill="#777"/><rect x="494.2" y="61.8" width="1.6" height="1.2" fill="#222"/><rect x="494.2" y="64.4" width="1.6" height="1.2" fill="#222"/><rect x="494.2" y="67" width="1.6" height="1.2" fill="#222"/><rect x="512" y="58.4" width="13" height="12.4" fill="#f6f6f6" stroke="#a0a0a0" stroke-width="0.8"/><rect x="530.4" y="57.6" width="15.4" height="14" fill="#eef4fc" stroke="#3a78c8" stroke-width="1"/><rect x="530.4" y="57.6" width="15.4" height="2.2" fill="#3a78c8"/><rect x="533" y="62.6" width="10.4" height="6.4" fill="#fff" stroke="#8ab0e0" stroke-width="0.7"/><rect x="543.6" y="57.8" width="1.6" height="1.4" fill="#e03030"/><rect x="550" y="57" width="13" height="2" fill="#555"/><rect x="550.4" y="59" width="6.6" height="11.4" fill="#fff" stroke="#333" stroke-width="0.8"/><rect x="551.6" y="61" width="4.2" height="1" fill="#333"/><rect x="551.6" y="63.2" width="4.2" height="1" fill="#333"/><rect x="551.6" y="65.4" width="4.2" height="1" fill="#333"/><rect x="551.6" y="67.6" width="4.2" height="1" fill="#333"/><rect x="555.6" y="64.6" width="10" height="7" rx="1" fill="#dce8f8" stroke="#4a80d0" stroke-width="0.8"/><circle cx="991.6" cy="61.4" r="3.6" fill="#d8e8fa" stroke="#5a8ad0" stroke-width="0.8"/><path d="M989.8 59.6 L991.6 61.2 L993.4 59.6 M989.8 61.8 L991.6 63.4 L993.4 61.8" stroke="#2a5ab0" stroke-width="0.7" fill="none"/></svg>
<div class="a" style="left:274px;top:69.2px;width:5.40px;height:0.80px;background:#4a7ce0;"></div>
<div class="t" style="left:28.00px;top:5.23px;height:12px;line-height:12px;font-size:8.8px;color:#999;letter-spacing:-0.271px;">Lazarus IDE v2.0.2 r60954 - project1 (идёт отладка ...)</div>
<div class="t" style="left:12.00px;top:23.53px;height:12px;line-height:12px;font-size:8.8px;color:#000;letter-spacing:-0.260px;">Файл</div>
<div class="t" style="left:43.60px;top:23.53px;height:12px;line-height:12px;font-size:8.8px;color:#000;letter-spacing:-0.220px;">Правка</div>
<div class="t" style="left:83.00px;top:23.53px;height:12px;line-height:12px;font-size:8.8px;color:#000;letter-spacing:0.122px;">Поиск</div>
<div class="t" style="left:119.00px;top:23.53px;height:12px;line-height:12px;font-size:8.8px;color:#000;letter-spacing:-0.641px;">Вид</div>
<div class="t" style="left:143.60px;top:23.53px;height:12px;line-height:12px;font-size:8.8px;color:#000;letter-spacing:-0.190px;">Код</div>
<div class="t" style="left:169.00px;top:23.53px;height:12px;line-height:12px;font-size:8.8px;color:#000;">Проект</div>
<div class="t" style="left:208.00px;top:23.53px;height:12px;line-height:12px;font-size:8.8px;color:#000;letter-spacing:0.078px;">Запуск</div>
<div class="t" style="left:246.40px;top:23.53px;height:12px;line-height:12px;font-size:8.8px;color:#000;letter-spacing:-0.359px;">Пакет</div>
<div class="t" style="left:280.00px;top:23.53px;height:12px;line-height:12px;font-size:8.8px;color:#000;letter-spacing:-0.354px;">Сервис</div>
<div class="t" style="left:319.40px;top:23.53px;height:12px;line-height:12px;font-size:8.8px;color:#000;letter-spacing:0.037px;">Окно</div>
<div class="t" style="left:351.00px;top:23.53px;height:12px;line-height:12px;font-size:8.8px;color:#000;letter-spacing:-0.217px;">Справка</div>
<div class="t" style="left:184.40px;top:38.63px;height:12px;line-height:12px;font-size:8.8px;color:#000;letter-spacing:-0.213px;">Standard</div>
<div class="t" style="left:228.00px;top:39.83px;height:12px;line-height:12px;font-size:8.8px;color:#000;letter-spacing:0.136px;">Additional</div>
<div class="t" style="left:276.60px;top:39.83px;height:12px;line-height:12px;font-size:8.8px;color:#000;letter-spacing:0.141px;">Common Controls</div>
<div class="t" style="left:358.00px;top:39.83px;height:12px;line-height:12px;font-size:8.8px;color:#000;letter-spacing:-0.121px;">Dialogs</div>
<div class="t" style="left:395.00px;top:39.83px;height:12px;line-height:12px;font-size:8.8px;color:#000;letter-spacing:-0.100px;">Data Controls</div>
<div class="t" style="left:456.00px;top:39.83px;height:12px;line-height:12px;font-size:8.8px;color:#000;letter-spacing:-0.219px;">Data Access</div>
<div class="t" style="left:511.00px;top:39.83px;height:12px;line-height:12px;font-size:8.8px;color:#000;letter-spacing:-0.224px;">System</div>
<div class="t" style="left:548.50px;top:39.83px;height:12px;line-height:12px;font-size:8.8px;color:#000;letter-spacing:-0.178px;">SQLdb</div>
<div class="t" style="left:583.50px;top:39.83px;height:12px;line-height:12px;font-size:8.8px;color:#000;letter-spacing:-0.023px;">Misc</div>
<div class="t" style="left:618.50px;top:39.83px;height:12px;line-height:12px;font-size:8.8px;color:#000;letter-spacing:-0.190px;">SynEdit</div>
<div class="t" style="left:656.00px;top:39.83px;height:12px;line-height:12px;font-size:8.8px;color:#000;letter-spacing:-0.178px;">LazControls</div>
<div class="t" style="left:710.00px;top:39.83px;height:12px;line-height:12px;font-size:8.8px;color:#000;letter-spacing:-1.098px;">RTTI</div>
<div class="t" style="left:745.00px;top:39.83px;height:12px;line-height:12px;font-size:8.8px;color:#000;letter-spacing:-0.035px;">IPro</div>
<div class="t" style="left:781.00px;top:39.83px;height:12px;line-height:12px;font-size:8.8px;color:#000;letter-spacing:-0.203px;">Chart</div>
<div class="t" style="left:815.00px;top:39.83px;height:12px;line-height:12px;font-size:8.8px;color:#000;letter-spacing:-0.219px;">Pascal Script</div>
<div class="t" style="left:256.40px;top:59.03px;height:12px;line-height:12px;font-size:6.6px;color:#222;letter-spacing:0.381px;">Ok</div>
<div class="t" style="left:274.00px;top:58.16px;height:12px;line-height:12px;font-size:9.6px;color:#4a7ce0;letter-spacing:-0.449px;">Abc</div>
<div class="t" style="left:294.20px;top:58.38px;height:12px;line-height:12px;font-size:9.4px;color:#111;letter-spacing:-0.519px;">ab</div>
<div class="t" style="left:336.20px;top:58.39px;height:12px;line-height:12px;font-size:7px;color:#111;letter-spacing:0.302px;">on</div>
<div class="t" style="left:558.40px;top:61.80px;height:12px;line-height:12px;font-size:4.6px;color:#333;letter-spacing:-0.337px;">Ok</div></div>
<div class="L"><div class="a" style="left:-5px;top:533.5px;width:1011.00px;height:35.50px;background:linear-gradient(90deg,#20303a 0%,#1f2e3b 45%,#1b2a42 70%,#1a2746 100%);"></div>
<div class="a" style="left:395px;top:533.5px;width:34.50px;height:29.50px;background:#45535e;"></div>
<svg style="left:0;top:533px" width="1000" height="30" viewBox="0 533 1000 30"><path d="M11 543.6 L16.3 542.9 V547.7 H11 Z M17 542.8 L23.6 541.9 V547.7 H17 Z M11 548.4 H16.3 V553.2 L11 552.5 Z M17 548.4 H23.6 V554.2 L17 553.3 Z" fill="#fff"/><circle cx="54.6" cy="546.2" r="3.9" fill="none" stroke="#fff" stroke-width="1.1"/><path d="M51.9 549 L47.6 553.6" stroke="#fff" stroke-width="1.2"/><path d="M83.5 542.3 V554 M90.8 542.3 V554 M83.5 544.3 H90.8 M83.5 551.8 H90.8" stroke="#fff" stroke-width="1" fill="none"/><path d="M93.2 542.3 V554" stroke="#fff" stroke-width="1"/><rect x="92.3" y="545.6" width="1.8" height="2.6" fill="#fff"/><path d="M121.5 544 V542.3 A3.6 3.4 0 0 1 128.7 542.3 V544" fill="none" stroke="#fff" stroke-width="0.9"/><path d="M116.8 543.8 H133.5 V554.5 Q133.5 556 132 556 H118.3 Q116.8 556 116.8 554.5 Z" fill="#fff"/><rect x="121.3" y="546.2" width="3.4" height="3.4" fill="#f25022"/><rect x="125.5" y="546.2" width="3.4" height="3.4" fill="#7fba00"/><rect x="121.3" y="550.4" width="3.4" height="3.4" fill="#00a4ef"/><rect x="125.5" y="550.4" width="3.4" height="3.4" fill="#ffb900"/><path d="M154.3 548.5 C154.5 543.5 158 540.5 161.8 540.5 C166 540.5 168.2 543.8 168 548.8 H158.8 C158.9 551.5 161 552.8 163.3 552.8 C165 552.8 166.4 552.4 167.5 551.7 V554.6 C166.2 555.3 164.6 555.7 162.6 555.7 C158 555.7 155 552.6 155 548.3 C155.6 546 157.6 544.6 159 544.4 C158.2 545.2 158 546 158.8 546.4 H164.2 C164.2 544.4 163 543.3 161.4 543.3 C158.5 543.3 155.6 545.3 154.3 548.5 Z" fill="#1e88e5"/><path d="M189 541.3 H195 L196.5 542.8 H205.3 V554.4 H189 Z" fill="#f8c84a"/><rect x="189" y="543.8" width="16.3" height="10.6" fill="#fcd866"/><path d="M192.3 554.4 V549 H202 V554.4 H199.6 V551.6 H194.7 V554.4 Z" fill="#2a8be0"/><circle cx="232.5" cy="548" r="8" fill="#dd4b3e"/><path d="M232.5 548 L225.57 544 A8 8 0 0 0 232.5 556 L236 550 Z" fill="#1ba15f"/><path d="M232.5 548 L236 550 L232.5 556 A8 8 0 0 0 239.43 544 H232.5 Z" fill="#ffce43"/><circle cx="232.5" cy="548" r="3.8" fill="#fff"/><circle cx="232.5" cy="548" r="3" fill="#4a8af4"/><path d="M260 546.2 L268.8 540.8 L277.5 546.2 V555.8 H260 Z" fill="#0f7ad4"/><path d="M260 546.4 L268.8 552.3 L277.5 546.4 V555.8 H260 Z" fill="#35a9ee"/><path d="M262 543.5 H275.5 V548 L268.8 552.3 L262 548 Z" fill="#d8ecfa"/><path d="M260 555.8 L268.8 550 L277.5 555.8 Z" fill="#62c2f6"/><rect x="295.5" y="540.2" width="18" height="5" fill="#b0308a"/><rect x="295.5" y="545.2" width="18" height="5" fill="#3a64c8"/><rect x="295.5" y="550.2" width="18" height="5.2" fill="#4a9a3a"/><path d="M295.5 545.2 H313.5 M295.5 550.2 H313.5" stroke="#222" stroke-width="0.6"/><rect x="302.2" y="540.2" width="4.6" height="15.2" fill="#e8b040"/><rect x="301.3" y="546.5" width="6.4" height="4.6" fill="#c87828" stroke="#70400c" stroke-width="0.5"/><rect x="332" y="540.5" width="16.7" height="16" fill="#1a6fc8"/><path d="M332 556.5 V551 L338.5 544.5 L348.7 554.5 V556.5 Z" fill="#0a3f8a"/><path d="M338 556.5 L344.2 550.3 L348.7 554.8 V556.5 Z" fill="#3d9be8"/><circle cx="344.4" cy="544.4" r="1.5" fill="#fff"/><g transform="translate(375.6 548.5)"><path d="M0 -7.8 L2 -5.2 L5.2 -6 L5.4 -2.8 L8 -1 L6 1.6 L7 4.6 L3.8 5 L2.2 7.8 L0 6.2 L-2.2 7.8 L-3.8 5 L-7 4.6 L-6 1.6 L-8 -1 L-5.4 -2.8 L-5.2 -6 L-2 -5.2 Z" fill="#cfe0f6" stroke="#6e96d4" stroke-width="0.7"/><circle cx="0" cy="0.2" r="3.4" fill="#2c4a8c"/><path d="M-2 -1.5 L0 1.6 L2 -1.5" stroke="#fff" stroke-width="0.8" fill="none"/></g><defs><linearGradient id="pg2" x1="0" y1="0" x2="0" y2="1"><stop offset="0" stop-color="#b4bee0"/><stop offset="0.5" stop-color="#5472b4"/><stop offset="0.8" stop-color="#2aa0e8"/><stop offset="1" stop-color="#58c0f4"/></linearGradient></defs><circle cx="412" cy="548" r="7.9" fill="url(#pg2)" stroke="#98a8d0" stroke-width="0.6"/><ellipse cx="412.7" cy="550.8" rx="2.9" ry="2.1" fill="#000"/><ellipse cx="409.8" cy="545.8" rx="1" ry="1.4" fill="#000"/><ellipse cx="412.5" cy="545" rx="1" ry="1.4" fill="#000"/><ellipse cx="415.9" cy="547" rx="1.2" ry="1.1" fill="#111"/><ellipse cx="408.1" cy="549.2" rx="1.1" ry="1" fill="#000"/><g fill="#6aa8d8"><rect x="182.5" y="561.9" width="22.5" height="1.1"/><rect x="218" y="561.9" width="29" height="1.1"/><rect x="290" y="561.9" width="21" height="1.1"/><rect x="326" y="561.9" width="24" height="1.1"/><rect x="361" y="561.9" width="29" height="1.1"/><rect x="395" y="561.6" width="34.5" height="1.4"/></g><path d="M803.4 551 L807.5 546.6 L811.6 551" fill="none" stroke="#fff" stroke-width="1.1"/><rect x="820.6" y="542.3" width="8.6" height="11.9" rx="4.3" fill="#1890f8"/><path d="M823 545.8 L827 550 L825 552 V544.6 L827 546.6 L823 550.6" fill="none" stroke="#fff" stroke-width="0.8"/><rect x="839.5" y="545.6" width="8.6" height="5.2" fill="none" stroke="#fff" stroke-width="0.9"/><rect x="840.7" y="546.8" width="4.5" height="2.8" fill="#fff"/><path d="M848.7 547 V549.4" stroke="#fff" stroke-width="0.9"/><path d="M837 544.2 V546.8 M838.6 544.2 V546.8 M836.6 546.8 H839 V548.4 H836.6 Z M837.8 548.4 V551.4 H839.5" stroke="#fff" stroke-width="0.7" fill="none"/><g fill="none" stroke="#c8ccd4" stroke-width="0.9"><path d="M857 552.6 A8.6 8.6 0 0 1 865.6 544.6"/><path d="M859.6 552.6 A6 6 0 0 1 865.6 547.2"/><path d="M862.2 552.6 A3.4 3.4 0 0 1 865.6 549.6"/></g><circle cx="865" cy="552.2" r="0.9" fill="#fff"/><path d="M872 546.6 H874 L876.6 544.2 V552.6 L874 550.2 H872 Z" fill="none" stroke="#fff" stroke-width="0.8"/><path d="M878.4 546.4 A2.8 2.8 0 0 1 878.4 550.4 M880.2 544.8 A5 5 0 0 1 880.2 552 M882 543.4 A7 7 0 0 1 882 553.4" fill="none" stroke="#fff" stroke-width="0.8"/><path d="M970 542.8 H982 V551 H975 L972.4 553.4 V551 H970 Z" fill="#fff"/><path d="M972 545 H980 M972 547 H980 M972 549 H978" stroke="#1b2844" stroke-width="0.6"/><circle cx="981.1" cy="554.2" r="4.9" fill="#2a2e36" stroke="#c8c8c8" stroke-width="0.8"/><rect x="994.6" y="534" width="0.8" height="29" fill="#6a7280"/></svg>
<div class="t" style="left:891.80px;top:541.73px;height:12px;line-height:12px;font-size:8.8px;color:#fff;letter-spacing:-0.708px;">РУС</div>
<div class="t" style="left:927.20px;top:534.93px;height:12px;line-height:12px;font-size:8.8px;color:#fff;letter-spacing:-0.503px;">15:08</div>
<div class="t" style="left:917.60px;top:548.23px;height:12px;line-height:12px;font-size:8.8px;color:#fff;letter-spacing:-0.463px;">20.06.2020</div>
<div class="t" style="left:979.50px;top:547.69px;height:12px;line-height:12px;font-size:7px;color:#fff;">1</div></div>
</div></div></body></html>
